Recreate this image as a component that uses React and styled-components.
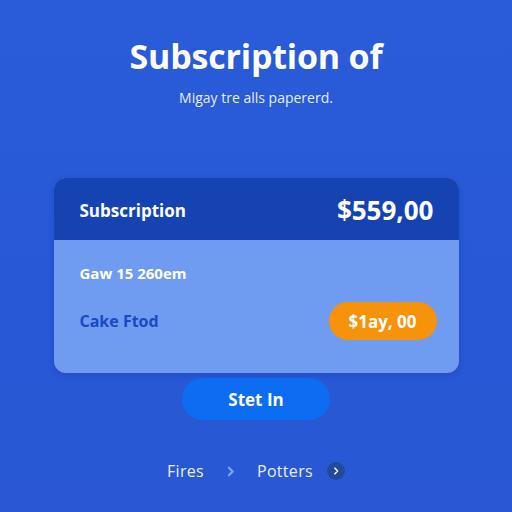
import React from "react";
import styled, { createGlobalStyle } from "styled-components";

const Global = createGlobalStyle`
  html, body { margin: 0; padding: 0; }
  body {
    width: 512px;
    height: 512px;
    overflow: hidden;
    font-family: "Open Sans", "Noto Sans", sans-serif;
  }
`;

const Page = styled.div`
  width: 512px;
  height: 512px;
  box-sizing: border-box;
  background: linear-gradient(180deg, #2a5bd8 0%, #2858d6 60%, #2a58d4 100%);
  display: flex;
  flex-direction: column;
  align-items: center;
  padding-top: 34px;
`;

const Title = styled.h1`
  margin: 0;
  color: #ffffff;
  font-size: 34px;
  font-weight: 700;
  letter-spacing: -0.2px;
  line-height: 44px;
`;

const Subtitle = styled.p`
  margin: 10px 0 0;
  color: #e6edff;
  font-size: 14px;
  line-height: 20px;
`;

const Card = styled.section`
  margin-top: 70px;
  width: 405px;
  border-radius: 12px;
  overflow: hidden;
  background: #6f9bf1;
  box-shadow: 0 2px 6px rgba(10, 30, 110, 0.18);
`;

const CardHeader = styled.div`
  height: 62px;
  background: #1543b2;
  display: flex;
  align-items: center;
  justify-content: space-between;
  padding: 2px 25px 0 26px;
  box-sizing: border-box;
`;

const HeaderLabel = styled.span`
  color: #ffffff;
  font-size: 17px;
  font-weight: 700;
`;

const HeaderPrice = styled.span`
  color: #ffffff;
  font-size: 26px;
  font-weight: 700;
`;

const CardBody = styled.div`
  padding: 14px 22px 33px 26px;
  display: flex;
  flex-direction: column;
  gap: 10px;
`;

const Row = styled.div`
  display: flex;
  align-items: center;
  justify-content: space-between;
  min-height: 38px;
`;

const RowText = styled.span`
  color: ${(p) => p.$tone || "#ffffff"};
  font-size: ${(p) => p.$size || "15px"};
  font-weight: 700;
`;

const Pill = styled.span`
  width: 108px;
  height: 38px;
  border-radius: 19px;
  background: #f7920b;
  color: #ffffff;
  font-size: 17px;
  font-weight: 700;
  display: flex;
  align-items: center;
  justify-content: center;
`;

const Button = styled.button`
  margin-top: 5px;
  width: 148px;
  height: 42px;
  border: none;
  border-radius: 21px;
  background: #0d6df2;
  color: #ffffff;
  font-family: inherit;
  font-size: 17px;
  font-weight: 700;
`;

const Crumbs = styled.nav`
  margin-top: 40px;
  display: flex;
  align-items: center;
  gap: 20px;
  color: #e8eeff;
  font-size: 16px;
`;

const Crumb = styled.span`
  letter-spacing: 0.3px;
`;

const Sep = styled.span`
  color: #7ea4f2;
  display: flex;
`;

const Dot = styled.span`
  width: 18px;
  height: 18px;
  border-radius: 50%;
  background: #234a9a;
  margin-left: -6px;
  display: flex;
  align-items: center;
  justify-content: center;
`;

const Chevron = ({ size = 12, color = "currentColor", width = 2 }) => (
  <svg width={size} height={size} viewBox="0 0 12 12" fill="none">
    <path d="M4.5 2.5 8 6 4.5 9.5" stroke={color} strokeWidth={width} strokeLinecap="round" strokeLinejoin="round" />
  </svg>
);

export default function App() {
  return (
    <Page>
      <Global />
      <Title>Subscription of</Title>
      <Subtitle>Migay tre alls papererd.</Subtitle>
      <Card>
        <CardHeader>
          <HeaderLabel>Subscription</HeaderLabel>
          <HeaderPrice>$559,00</HeaderPrice>
        </CardHeader>
        <CardBody>
          <Row>
            <RowText>Gaw 15 260em</RowText>
          </Row>
          <Row>
            <RowText $tone="#1749c4" $size="16px">Cake Ftod</RowText>
            <Pill>$1ay, 00</Pill>
          </Row>
        </CardBody>
      </Card>
      <Button>Stet In</Button>
      <Crumbs>
        <Crumb>Fires</Crumb>
        <Sep><Chevron size={13} /></Sep>
        <Crumb>Potters</Crumb>
        <Dot><Chevron size={10} color="#ffffff" width={1.6} /></Dot>
      </Crumbs>
    </Page>
  );
}
